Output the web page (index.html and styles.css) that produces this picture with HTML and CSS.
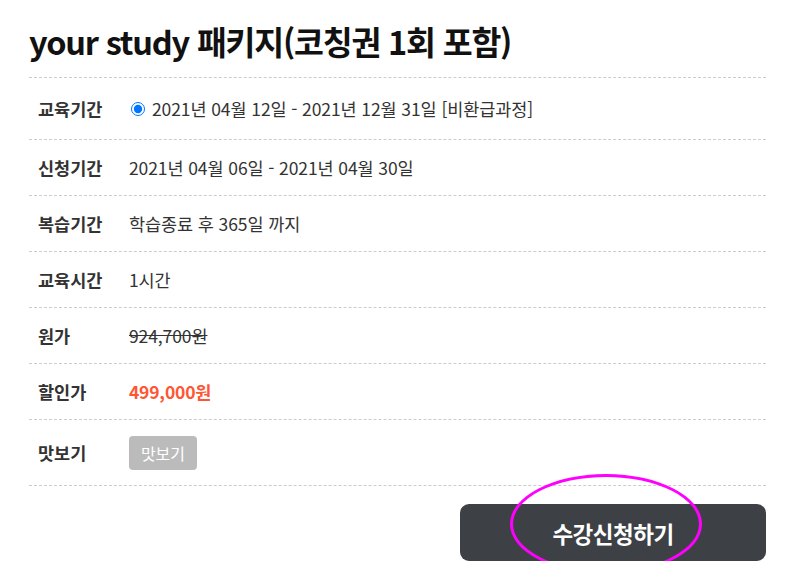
FILE: index.html
```html
<!DOCTYPE html>
<html lang="ko">
<head>
<meta charset="utf-8">
<link rel="stylesheet" href="styles.css">
</head>
<body>
<div class="page">
  <h1 class="title">your study 패키지(코칭권 1회 포함)</h1>
  <div class="info">
    <div class="row row-first">
      <div class="label">교육기간</div>
      <div class="value"><label class="opt"><input type="radio" name="period" checked> 2021년 04월 12일 - 2021년 12월 31일 [비환급과정]</label></div>
    </div>
    <div class="row">
      <div class="label">신청기간</div>
      <div class="value">2021년 04월 06일 - 2021년 04월 30일</div>
    </div>
    <div class="row">
      <div class="label">복습기간</div>
      <div class="value">학습종료 후 365일 까지</div>
    </div>
    <div class="row">
      <div class="label">교육시간</div>
      <div class="value">1시간</div>
    </div>
    <div class="row">
      <div class="label">원가</div>
      <div class="value"><span class="strike">924,700원</span></div>
    </div>
    <div class="row">
      <div class="label">할인가</div>
      <div class="value"><span class="sale">499,000원</span></div>
    </div>
    <div class="row row-last">
      <div class="label">맛보기</div>
      <div class="value"><span class="badge">맛보기</span></div>
    </div>
  </div>
  <div class="actions">
    <button class="apply">수강신청하기</button>
    <span class="mark"></span>
  </div>
</div>
</body>
</html>
```
FILE: styles.css
```css
* { box-sizing: border-box; }
html, body { margin: 0; padding: 0; background: #fff; }
body {
  font-family: "Noto Sans CJK KR", "Noto Sans", sans-serif;
  color: #333;
}
.page {
  width: 737px;
  margin-left: 29px;
  padding-top: 17px;
}
.title {
  margin: 0;
  font-size: 32.5px;
  font-weight: 700;
  color: #111;
  letter-spacing: -1.2px;
  line-height: 48px;
  height: 60px;
}
.info {
  border-top: 1px dashed #ccc;
}
.row {
  display: flex;
  align-items: center;
  height: 56px;
  border-bottom: 1px dashed #ccc;
  font-size: 17.5px;
}
.row-first { height: 62px; }
.row-last { height: 66px; }
.label {
  width: 100px;
  padding-left: 9px;
  font-weight: 700;
  font-size: 17.5px;
  color: #333;
  letter-spacing: 0;
}
.value {
  color: #333;
  letter-spacing: -0.1px;
}
.opt { display: flex; align-items: center; }
.opt input {
  margin: 0 7px 0 2px;
  width: 14px;
  height: 14px;
}
.strike { text-decoration: line-through; }
.sale { color: #ff5533; font-weight: 700; font-size: 17.5px; letter-spacing: -0.2px; }
.badge {
  display: inline-block;
  background: #bbb;
  color: #fff;
  font-size: 16px;
  border-radius: 4px;
  padding: 0 12px;
  height: 34px;
  line-height: 34px;
}
.actions {
  position: relative;
  display: flex;
  justify-content: flex-end;
  padding-top: 18px;
}
.apply {
  width: 306px;
  height: 57px;
  background: #3d4145;
  border: none;
  border-radius: 9px;
  color: #fff;
  font-family: "Noto Sans CJK KR", "Noto Sans", sans-serif;
  font-size: 22.5px;
  font-weight: 700;
  letter-spacing: -0.5px;
}
.mark {
  position: absolute;
  left: 481px;
  top: -12px;
  width: 192px;
  height: 100px;
  border: 3px solid #ff00ff;
  border-radius: 50%;
}
```
